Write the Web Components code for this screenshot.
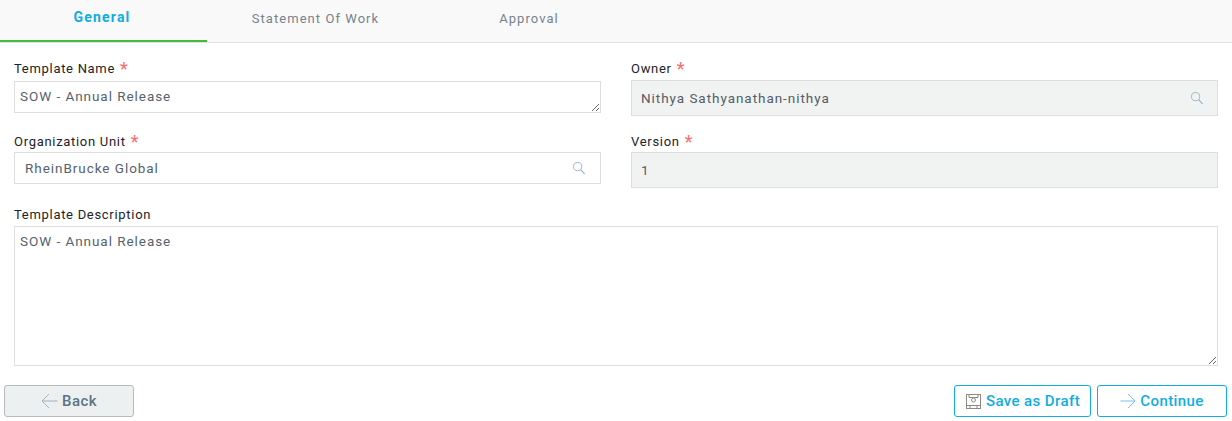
<!DOCTYPE html>
<html>
<head>
<meta charset="utf-8">
<style>
  html, body { margin: 0; background: #fff; }
  body { font: 13px Roboto, "Liberation Sans", sans-serif; letter-spacing: 0.8px; overflow: hidden; height: 421px; }
</style>
</head>
<body>
<template-form></template-form>
<script>
const SEARCH_ICON = `<svg width="14" height="14" viewBox="0 0 14 14" fill="none"><circle cx="5.6" cy="5.6" r="4.1" stroke="#9fb6c4"/><path d="M8.6 8.6 12.6 12.8" stroke="#7fb4d6" stroke-width="1.1"/></svg>`;

class TabBar extends HTMLElement {
  constructor() {
    super();
    const shadow = this.attachShadow({ mode: "open" });
    shadow.innerHTML = `
      <style>
        :host { display: flex; height: 43px; box-sizing: border-box; background: #f9f9f9; border-bottom: 1px solid #e1e1e1; }
      </style>
      <slot></slot>`;
  }
}

class TabItem extends HTMLElement {
  constructor() {
    super();
    const shadow = this.attachShadow({ mode: "open" });
    shadow.innerHTML = `
      <style>
        :host { display: block; box-sizing: border-box; height: 42px; width: var(--w, 214px); padding-top: 11px; line-height: 15px; text-align: center; color: #76838f; letter-spacing: 1.05px; }
        :host([active]) { color: #10ade2; font-weight: 700; font-size: 14px; letter-spacing: 1.2px; border-bottom: 2px solid #43bc3c; padding: 10px 3px 0 0; }
      </style>
      <slot></slot>`;
  }
}

class FormField extends HTMLElement {
  constructor() {
    super();
    const shadow = this.attachShadow({ mode: "open" });
    const required = this.hasAttribute("required") ? `<span class="star">*</span>` : "";
    const icon = this.hasAttribute("search") ? SEARCH_ICON : "";
    shadow.innerHTML = `
      <style>
        :host { display: block; }
        label { display: block; height: 15px; line-height: 15px; margin-bottom: var(--gap, 4px); color: #1d2328; white-space: nowrap; letter-spacing: 0.7px; }
        .star { color: #fb6b6b; font-size: 18px; line-height: 12px; margin-left: 5px; vertical-align: -2px; }
        .box { box-sizing: border-box; border: 1px solid #dedede; color: #56636e; background: #fff; display: flex; align-items: center; justify-content: space-between; padding: 0 14px 0 10px; height: var(--h, 32px); font-size: 13.5px; letter-spacing: 0.95px; }
        :host([disabled]) .box { background: #f1f3f3; color: #565d65; padding: 0 13px 0 9px; }
        :host([area]) .box { display: block; padding: 6px 5px; resize: vertical; overflow: auto; line-height: 17px; }
        svg { flex: none; }
      </style>
      <label><slot name="label"></slot>${required}</label>
      <div class="box"><span><slot></slot></span>${icon}</div>`;
  }
}

class ActionButton extends HTMLElement {
  constructor() {
    super();
    const shadow = this.attachShadow({ mode: "open" });
    shadow.innerHTML = `
      <style>
        :host { display: flex; align-items: center; justify-content: center; gap: 4px; box-sizing: border-box; height: 32px; width: var(--w, 130px); border: 1px solid #10ade2; border-radius: 3px; color: #10ade2; background: #fff; font-size: 15px; font-weight: 500; letter-spacing: 0.4px; }
        :host([plain]) { background: #ecf0f1; border-color: #b4bcbf; color: #5c7384; }
        ::slotted(svg) { flex: none; }
      </style>
      <slot></slot>`;
  }
}

class TemplateForm extends HTMLElement {
  constructor() {
    super();
    const shadow = this.attachShadow({ mode: "open" });
    shadow.innerHTML = `
      <style>
        :host { display: block; }
        .fields { display: grid; grid-template-columns: 587px 587px; column-gap: 30px; padding: 18px 14px 0; }
        .column { display: flex; flex-direction: column; }
        .org { margin-top: 21px; --gap: 3px; }
        .version { margin-top: 18px; --gap: 3px; }
        .desc { padding: 19px 14px 0; }
        .actions { display: flex; padding: 19px 5px 0 4px; gap: 6px; }
        .spacer { flex: 1; }
      </style>
      <tab-bar>
        <tab-item active style="--w:207px">General</tab-item>
        <tab-item style="--w:217px">Statement Of Work</tab-item>
        <tab-item style="--w:210px">Approval</tab-item>
      </tab-bar>
      <div class="fields">
        <div class="column">
          <form-field required area style="--h:32px; --gap:5px"><span slot="label">Template Name</span>SOW - Annual Release</form-field>
          <form-field required search class="org"><span slot="label">Organization Unit</span>RheinBrucke Global</form-field>
        </div>
        <div class="column">
          <form-field required search disabled style="--h:36px"><span slot="label">Owner</span>Nithya Sathyanathan-nithya</form-field>
          <form-field required disabled class="version" style="--h:36px"><span slot="label">Version</span>1</form-field>
        </div>
      </div>
      <div class="desc">
        <form-field area style="--h:140px"><span slot="label">Template Description</span>SOW - Annual Release</form-field>
      </div>
      <div class="actions">
        <action-button plain>
          <svg width="17" height="16" viewBox="0 0 17 16" fill="none" stroke="#a3b1ba"><path d="M16.5 8H1M8 1 1 8l7 7"/></svg>
          Back
        </action-button>
        <div class="spacer"></div>
        <action-button style="--w:137px">
          <svg width="17" height="17" viewBox="0 0 17 17" fill="none" stroke="#8d8a86"><rect x="1.5" y="1.5" width="14" height="14"/><circle cx="8.5" cy="7" r="2"/><path d="M4 1.5v3h9v-3M1.5 12.5H5v3M15.5 12.5H12v3M5 12.5h7"/></svg>
          Save as Draft
        </action-button>
        <action-button>
          <svg width="16" height="16" viewBox="0 0 16 16" fill="none" stroke="#7dbdea"><path d="M.5 8H15M8 1l7 7-7 7"/></svg>
          Continue
        </action-button>
      </div>`;
  }
}

customElements.define("tab-bar", TabBar);
customElements.define("tab-item", TabItem);
customElements.define("form-field", FormField);
customElements.define("action-button", ActionButton);
customElements.define("template-form", TemplateForm);
</script>
</body>
</html>
